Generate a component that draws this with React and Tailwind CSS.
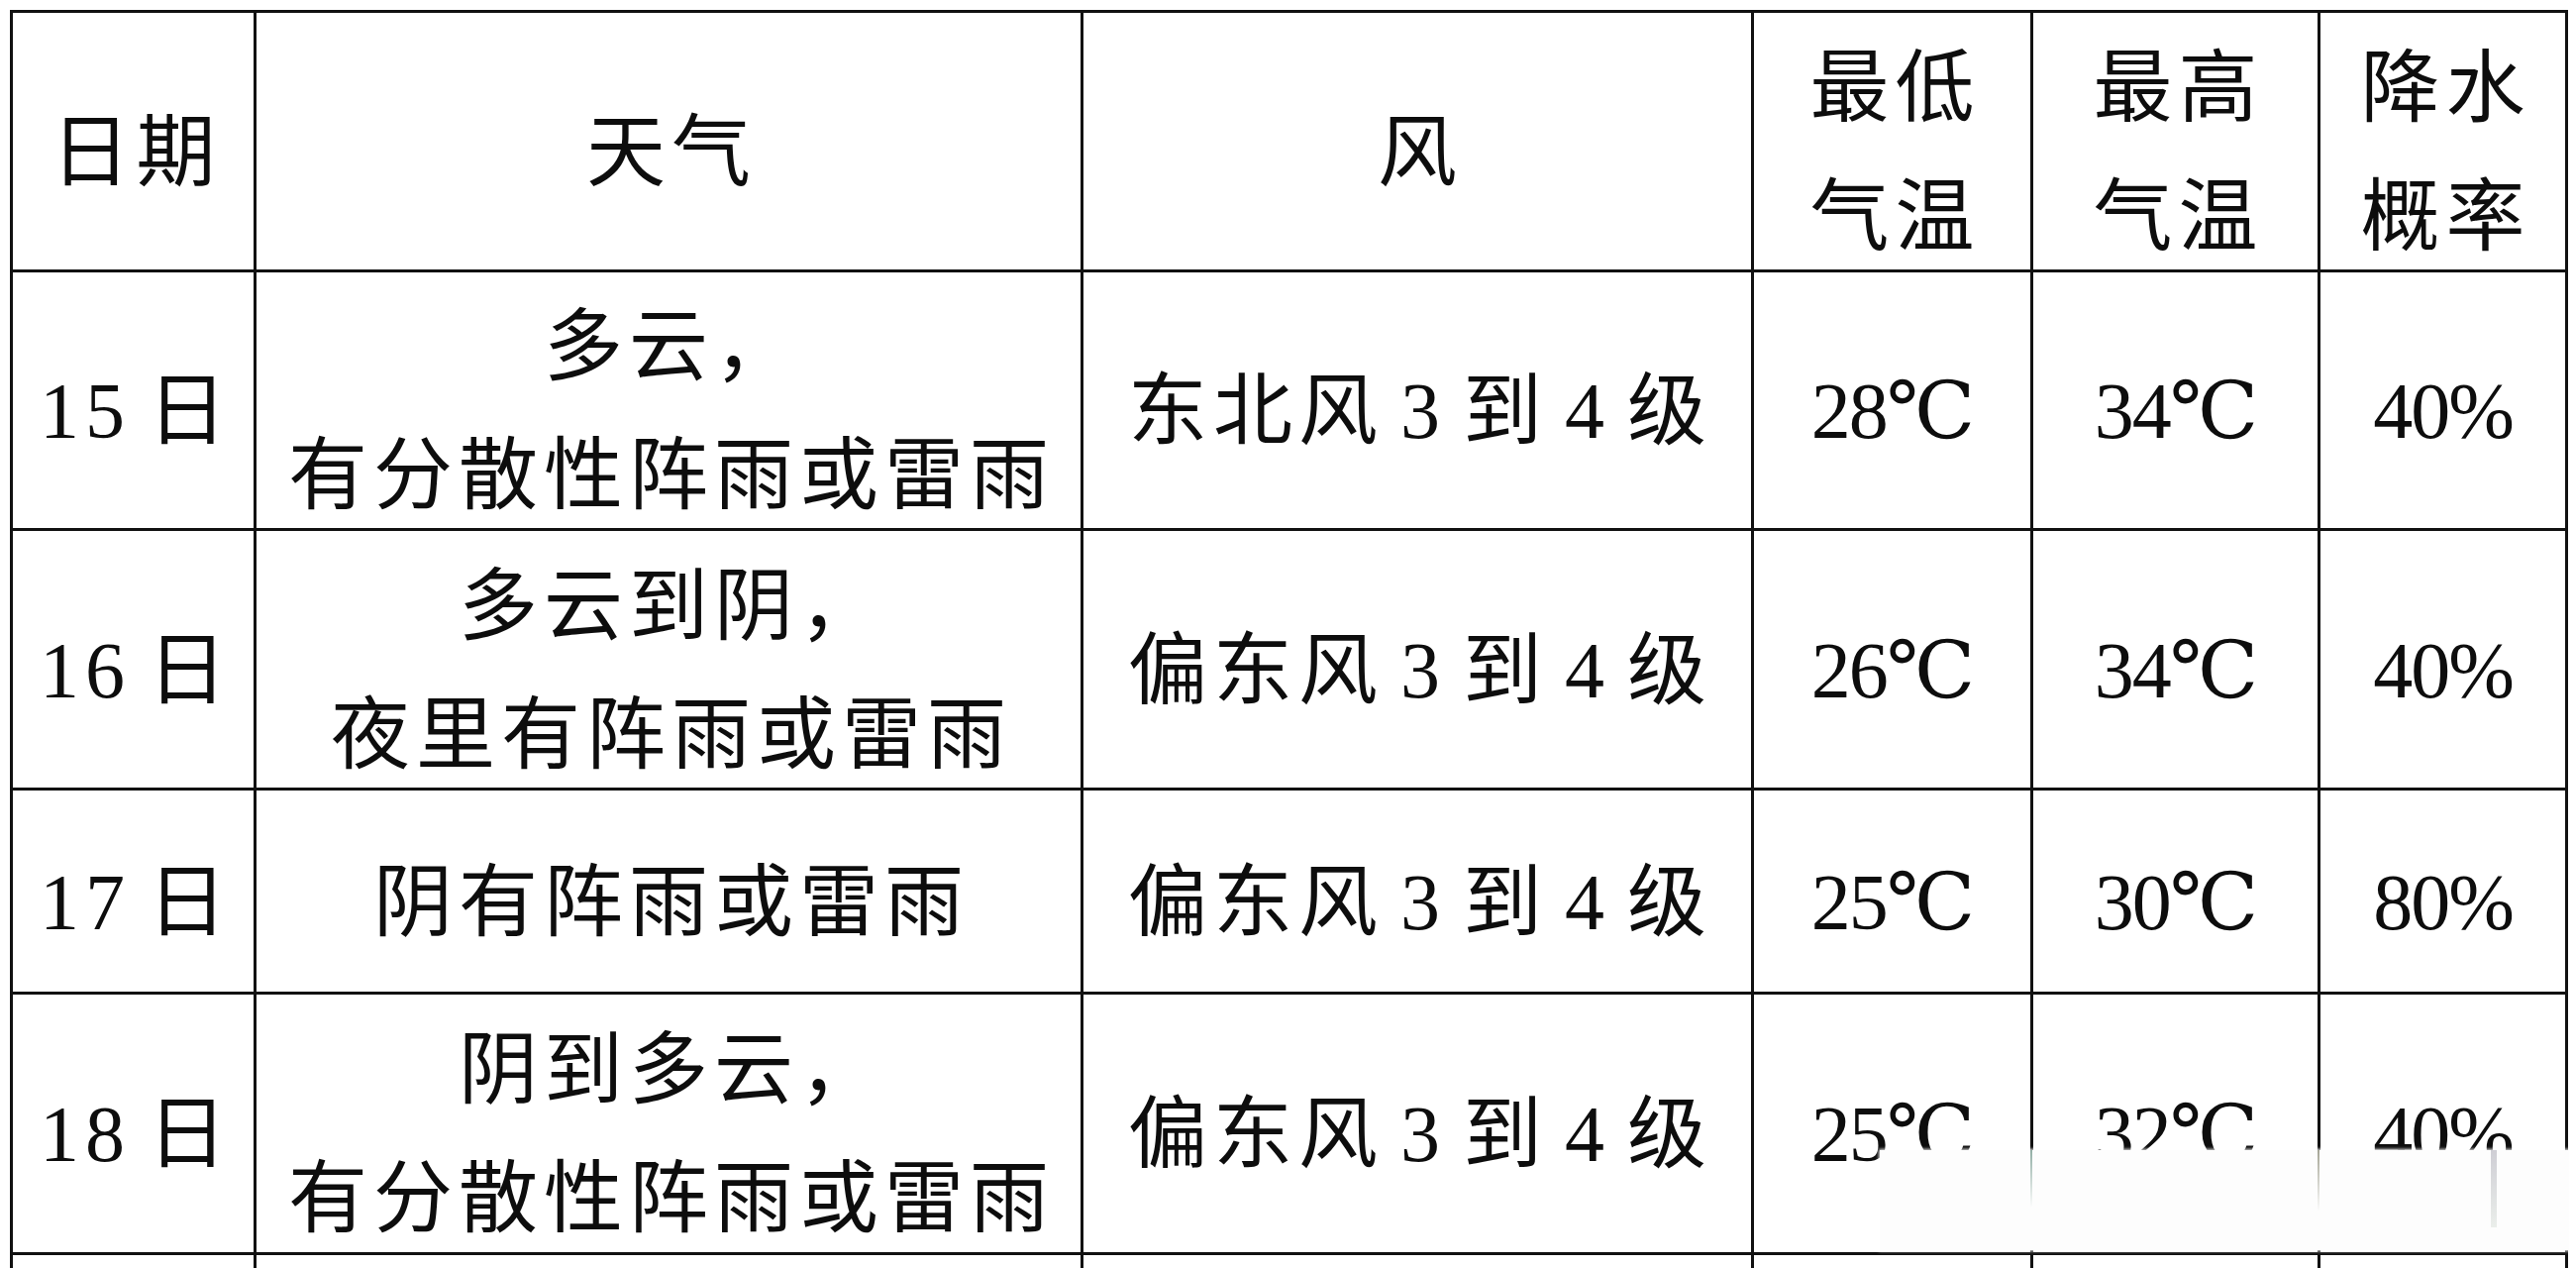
import React from "react";

const rows = [
  {
    date: "15 日",
    weather: ["多云，", "有分散性阵雨或雷雨"],
    wind: "东北风 3 到 4 级",
    low: "28℃",
    high: "34℃",
    rain: "40%",
  },
  {
    date: "16 日",
    weather: ["多云到阴，", "夜里有阵雨或雷雨"],
    wind: "偏东风 3 到 4 级",
    low: "26℃",
    high: "34℃",
    rain: "40%",
  },
  {
    date: "17 日",
    weather: ["阴有阵雨或雷雨"],
    wind: "偏东风 3 到 4 级",
    low: "25℃",
    high: "30℃",
    rain: "80%",
  },
  {
    date: "18 日",
    weather: ["阴到多云，", "有分散性阵雨或雷雨"],
    wind: "偏东风 3 到 4 级",
    low: "25℃",
    high: "32℃",
    rain: "40%",
  },
];

function Cell({ lines, num = false }) {
  return (
    <div className="bg-white flex flex-col items-center justify-center pt-[22px]">
      {lines.map((l, i) => (
        <div
          key={i}
          className={
            num
              ? "whitespace-pre leading-[130px] tracking-[-2px]"
              : "whitespace-pre leading-[130px] tracking-[6px] pl-[6px] [word-spacing:-9px]"
          }
        >
          {l}
        </div>
      ))}
    </div>
  );
}

export default function App() {
  return (
    <div className="relative w-[2601px] h-[1280px] overflow-hidden bg-white text-[80px] text-[#0d0d0d] font-['Liberation_Serif','DejaVu_Serif','Noto_Sans_CJK_SC',serif]">
      <div className="ml-[10px] mt-[10px] w-fit grid grid-cols-[243px_832px_674px_279px_287px_247px] grid-rows-[259px_258px_259px_203px_260px_260px] gap-[3px] bg-[#111] p-[3px]">
        <Cell lines={["日期"]} />
        <Cell lines={["天气"]} />
        <Cell lines={["风"]} />
        <Cell lines={["最低", "气温"]} />
        <Cell lines={["最高", "气温"]} />
        <Cell lines={["降水", "概率"]} />
        {rows.map((r) => (
          <React.Fragment key={r.date}>
            <Cell lines={[r.date]} />
            <Cell lines={r.weather} />
            <Cell lines={[r.wind]} />
            <Cell lines={[r.low]} num />
            <Cell lines={[r.high]} num />
            <Cell lines={[r.rain]} num />
          </React.Fragment>
        ))}
        <div className="bg-white" />
        <div className="bg-white" />
        <div className="bg-white" />
        <div className="bg-white" />
        <div className="bg-white" />
        <div className="bg-white" />
      </div>
      <div className="absolute left-[1898px] top-[1161px] w-[696px] h-[101px] bg-[#fdfdfd] shadow-[0_0_3px_1px_rgba(255,255,255,0.9)]">
        <div className="absolute left-[152px] top-0 w-[2px] h-[58px] bg-gradient-to-b from-[#4a7a6a] to-transparent opacity-60" />
        <div className="absolute left-[442px] top-0 w-[2px] h-[62px] bg-gradient-to-b from-[#6a6a50] to-transparent opacity-60" />
        <div className="absolute left-[617px] top-0 w-[6px] h-[78px] bg-gradient-to-b from-[#8a8898] to-[#cfd8cf] opacity-40" />
      </div>
    </div>
  );
}
